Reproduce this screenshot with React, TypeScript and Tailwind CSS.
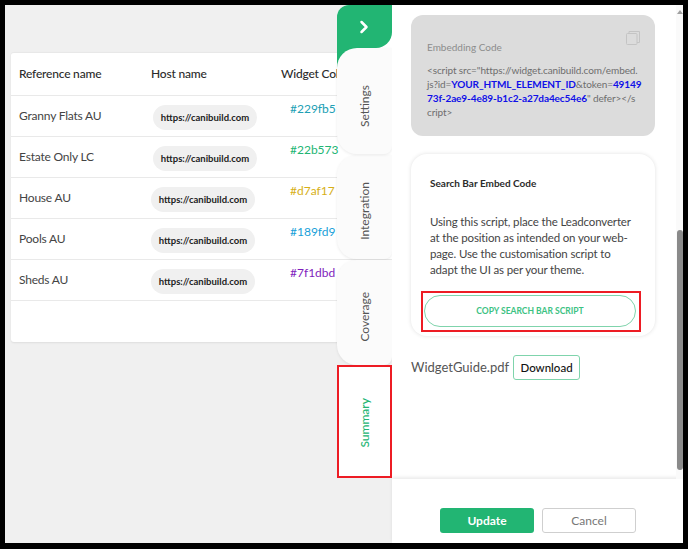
import { ChevronRight } from "lucide-react";

const rows = [
  { name: "Granny Flats AU", color: "#229fb5", cls: "text-[#229fb5]", inset: "ml-[2px]" },
  { name: "Estate Only LC", color: "#22b573", cls: "text-[#22b573]", inset: "ml-[2px]" },
  { name: "House AU", color: "#d7af17", cls: "text-[#d7af17]", inset: "" },
  { name: "Pools AU", color: "#189fd9", cls: "text-[#189fd9]", inset: "" },
  { name: "Sheds AU", color: "#7f1dbd", cls: "text-[#7f1dbd]", inset: "" },
];

function CopyIcon() {
  return (
    <svg width="14" height="14" viewBox="0 0 14 14" fill="none" stroke="#c4c4c4" strokeWidth="1">
      <rect x="0.5" y="2.5" width="10.5" height="11" rx="1" />
      <path d="M3 2.5V0.5H13.5V11.5H11" />
    </svg>
  );
}

function SideTab({ label, className }: { label: string; className: string }) {
  return (
    <div className={`flex items-center justify-center bg-[#fbfbfb] rounded-l-[20px] rounded-br-[8px] shadow-[0_1px_3px_rgba(0,0,0,0.08)] ${className}`}>
      <span className="[writing-mode:vertical-rl] rotate-180 text-[12px] text-[#555]">{label}</span>
    </div>
  );
}

export default function App() {
  return (
    <div className="h-[549px] w-[688px] bg-black pt-[5px] pl-[5px] pr-[5px] pb-[6px] font-['Lato',sans-serif] overflow-hidden">
      <div className="relative flex h-full bg-[#f0f0f0]">
        {/* Table side */}
        <div className="w-[387px] shrink-0 overflow-hidden pt-[47px] pl-[6px]">
          <div className="w-[420px] h-[290px] bg-white rounded-l-[3px] border-t border-[#e8e8e8] shadow-[0_1px_2px_rgba(0,0,0,0.08)]">
            <div className="grid grid-cols-[132px_130px_1fr] h-[43px] items-center pl-2 pb-[1px] border-b border-[#e9e9e9] text-[12px] tracking-[-0.2px] font-medium text-[#2b2b2b]">
              <span>Reference name</span>
              <span>Host name</span>
              <span>Widget Color</span>
            </div>
            {rows.map((r) => (
              <div key={r.name} className="grid grid-cols-[132px_130px_1fr] h-[41px] items-center pl-2 border-b border-[#e9e9e9]">
                <span className="text-[12px] tracking-[-0.2px] text-[#444]">{r.name}</span>
                <div className={`pt-[1px] ${r.inset}`}>
                  <span className="inline-flex h-[25px] w-[104px] items-center justify-center rounded-full bg-[#f0f0f0] text-[9.5px] font-bold text-[#222]">
                    https://canibuild.com
                  </span>
                </div>
                <span className={`pl-[9px] pb-[15px] text-[12px] ${r.cls}`}>{r.color}</span>
              </div>
            ))}
          </div>
        </div>

        {/* Side tabs */}
        <div className="relative -ml-[55px] flex h-full w-[55px] shrink-0 flex-col">
          <div className="h-[43px] bg-white rounded-tl-[12px]">
            <div className="flex h-full items-center justify-center pr-[2px] rounded-tl-[12px] rounded-br-[16px] bg-[#22b573]">
              <ChevronRight className="h-5 w-5 text-white" strokeWidth={3} />
            </div>
          </div>
          <div className="relative h-[106px]">
            <div className="absolute left-0 top-0 h-[20px] w-[20px] bg-[#22b573]" />
            <SideTab label="Settings" className="relative h-full pt-[10px]" />
          </div>
          <SideTab label="Integration" className="h-[104px] mt-[1px] pt-[8px]" />
          <SideTab label="Coverage" className="h-[105px] mt-[1px] pt-[8px]" />
          <div className="flex h-[113px] items-start justify-center bg-white pt-[33px]">
            <span className="[writing-mode:vertical-rl] rotate-180 text-[12px] font-medium text-[#22b573]">Summary</span>
          </div>
        </div>

        {/* Right panel */}
        <div className="relative flex h-full w-[291px] flex-col bg-white">
          <div className="flex-1 pl-[19px] pt-[10px]">
            <div className="relative h-[121px] w-[244px] rounded-[12px] bg-[#dcdcdc] pl-4 pr-2 pt-[25px]">
              <div className="absolute right-[15px] top-[16px]"><CopyIcon /></div>
              <p className="text-[10px] leading-[14px] text-[#8c8c8c]">Embedding Code</p>
              <p className="mt-[9px] whitespace-nowrap text-[10px] leading-[14px] tracking-[-0.1px] text-[#6e6e6e]">
                {'<script src="https://widget.canibuild.com/embed.'}
                <br />
                {"js?id="}
                <b className="text-[#1010e8]">YOUR_HTML_ELEMENT_ID</b>
                {"&token="}
                <b className="text-[#1010e8]">49149</b>
                <br />
                <b className="text-[#1010e8]">73f-2ae9-4e89-b1c2-a27da4ec54e6</b>
                {'" defer></s'}
                <br />
                {"cript>"}
              </p>
            </div>

            <div className="mt-[18px] h-[182px] w-[244px] rounded-[16px] bg-white px-[19px] pt-[22px] shadow-[0_0_4px_rgba(0,0,0,0.12)]">
              <p className="text-[10px] leading-[14px] font-bold text-[#2b2b2b]">Search Bar Embed Code</p>
              <p className="mt-[24px] whitespace-nowrap text-[11.5px] leading-[16px] tracking-[-0.15px] text-[#444]">
                Using this script, place the Leadconverter
                <br />
                at the position as intended on your web-
                <br />
                page. Use the customisation script to
                <br />
                adapt the UI as per your theme.
              </p>
              <button className="mt-[17px] -ml-[6px] flex h-[32px] w-[212px] items-center justify-center rounded-full border border-[#7fd4ac] text-[8.5px] font-bold text-[#3cc283]">
                COPY SEARCH BAR SCRIPT
              </button>
            </div>

            <div className="mt-[19px] flex items-center gap-[4px]">
              <span className="text-[13px] text-[#555]">WidgetGuide.pdf</span>
              <button className="h-[25px] w-[67px] rounded-[3px] border border-[#7fd4ac] text-[11.5px] font-medium text-[#111]">Download</button>
            </div>
          </div>

          {/* Footer */}
          <div className="flex h-[64px] items-start justify-start gap-2 bg-white pl-[48px] pt-[29px] shadow-[0_-2px_3px_rgba(0,0,0,0.08)]">
            <button className="h-[25px] w-[94px] rounded-[3px] bg-[#22b573] text-[12px] font-bold text-white">Update</button>
            <button className="h-[25px] w-[94px] rounded-[3px] border border-[#cfcfcf] text-[12px] text-[#777]">Cancel</button>
          </div>

          {/* Scrollbar */}
          <div className="absolute right-0 top-0 bottom-[64px] w-[7px] bg-[#fafafa]">
            <div className="mx-auto mt-[5px] h-0 w-0 border-x-[3px] border-b-[4px] border-x-transparent border-b-[#a0a0a0]" />
            <div className="absolute left-[1px] right-0 top-[225px] h-[240px] rounded-full bg-[#8a8a8a]" />
          </div>
        </div>

        {/* Red annotation boxes */}
        <div className="absolute left-[332px] top-[360px] h-[113px] w-[55px] border-2 border-[#ed1c24]" />
        <div className="absolute left-[416px] top-[286px] h-[41px] w-[220px] border-2 border-[#ed1c24]" />
      </div>
    </div>
  );
}
